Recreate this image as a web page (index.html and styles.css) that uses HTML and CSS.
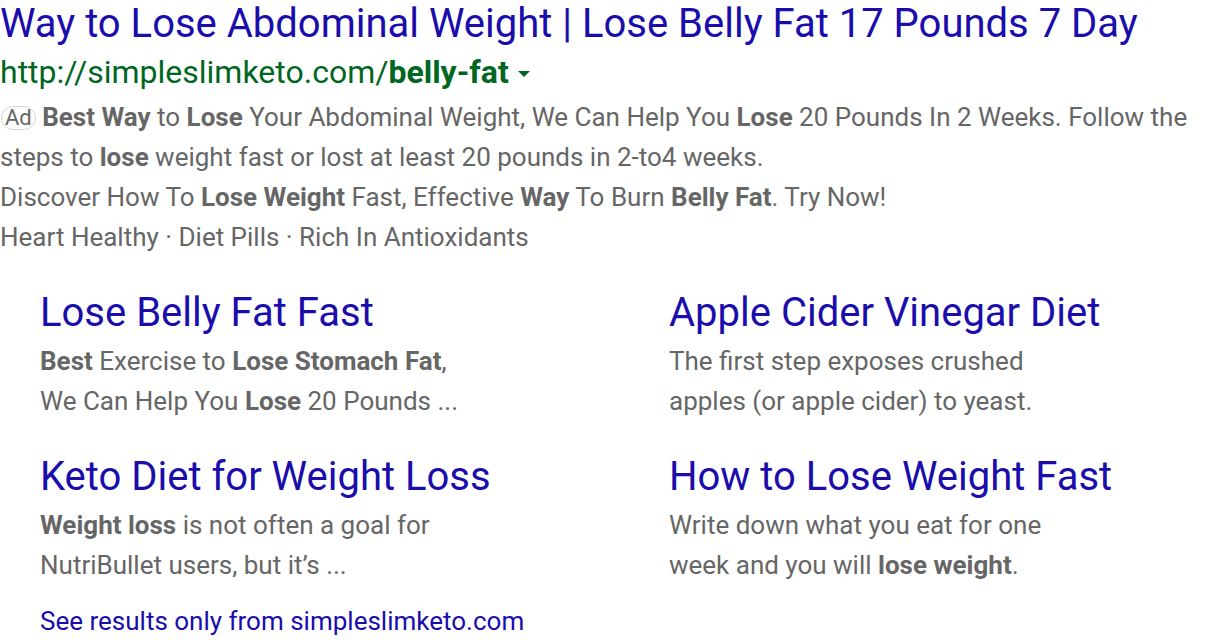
FILE: index.html
```html
<!DOCTYPE html>
<html>
<head>
<meta charset="utf-8">
<link rel="stylesheet" href="styles.css">
</head>
<body>
<div class="ad">
  <h1 class="title">Way to Lose Abdominal Weight | Lose Belly Fat 17 Pounds 7 Day</h1>
  <div class="url">http://simpleslimketo.com/<b>belly-fat</b><span class="caret"></span></div>
  <div class="desc">
    <p><span class="badge">Ad</span> <b>Best Way</b> to <b>Lose</b> Your Abdominal Weight, We Can Help You <b>Lose</b> 20 Pounds In 2 Weeks. Follow the steps to <b>lose</b> weight fast or lost at least 20 pounds in 2-to4 weeks.</p>
    <p>Discover How To <b>Lose Weight</b> Fast, Effective <b>Way</b> To Burn <b>Belly Fat</b>. Try Now!</p>
    <p>Heart Healthy · Diet Pills · Rich In Antioxidants</p>
  </div>
  <div class="sitelinks">
    <div class="sl">
      <a class="sl-title">Lose Belly Fat Fast</a>
      <p class="sl-desc"><b>Best</b> Exercise to <b>Lose Stomach Fat</b>,<br>We Can Help You <b>Lose</b> 20 Pounds ...</p>
    </div>
    <div class="sl">
      <a class="sl-title">Apple Cider Vinegar Diet</a>
      <p class="sl-desc">The first step exposes crushed<br>apples (or apple cider) to yeast.</p>
    </div>
    <div class="sl">
      <a class="sl-title">Keto Diet for Weight Loss</a>
      <p class="sl-desc"><b>Weight loss</b> is not often a goal for<br>NutriBullet users, but it’s ...</p>
    </div>
    <div class="sl">
      <a class="sl-title">How to Lose Weight Fast</a>
      <p class="sl-desc">Write down what you eat for one<br>week and you will <b>lose weight</b>.</p>
    </div>
  </div>
  <a class="more">See results only from simpleslimketo.com</a>
</div>
</body>
</html>
```
FILE: styles.css
```css
html, body {
  margin: 0;
  padding: 0;
  background: #fff;
}
body {
  font-family: Roboto, "Liberation Sans", Arial, sans-serif;
}
.ad {
  width: 1216px;
}
.title {
  margin: 0;
  font-size: 40px;
  font-weight: 400;
  line-height: 48px;
  color: #1a0dab;
  white-space: nowrap;
}
.url {
  font-size: 32px;
  line-height: 48px;
  color: #006621;
  display: flex;
  align-items: center;
}
.url b {
  font-weight: 700;
}
.caret {
  width: 0;
  height: 0;
  margin-left: 9px;
  margin-top: 4px;
  border-left: 6px solid transparent;
  border-right: 6px solid transparent;
  border-top: 6px solid #006621;
}
.desc {
  margin-top: 1px;
  font-size: 26px;
  line-height: 40px;
  color: #666;
}
.desc p {
  margin: 0;
}
b {
  font-weight: 700;
}
.badge {
  display: inline-block;
  box-sizing: border-box;
  height: 24px;
  border: 1.5px solid #d6d6d6;
  border-radius: 12px;
  font-size: 22px;
  line-height: 21px;
  padding: 0 3px;
  color: #666;
  vertical-align: 1px;
  margin-left: 1px;
}
.sitelinks {
  display: grid;
  grid-template-columns: 629px 547px;
  padding-left: 40px;
  margin-top: 28px;
  row-gap: 28px;
}
.sl-title {
  display: block;
  font-size: 40px;
  line-height: 56px;
  color: #1a0dab;
}
.sl-desc {
  margin: 0;
  font-size: 26px;
  line-height: 40px;
  color: #666;
}
.more {
  display: block;
  margin-top: 16px;
  padding-left: 40px;
  font-size: 26px;
  line-height: 40px;
  color: #1a0dab;
}
```
